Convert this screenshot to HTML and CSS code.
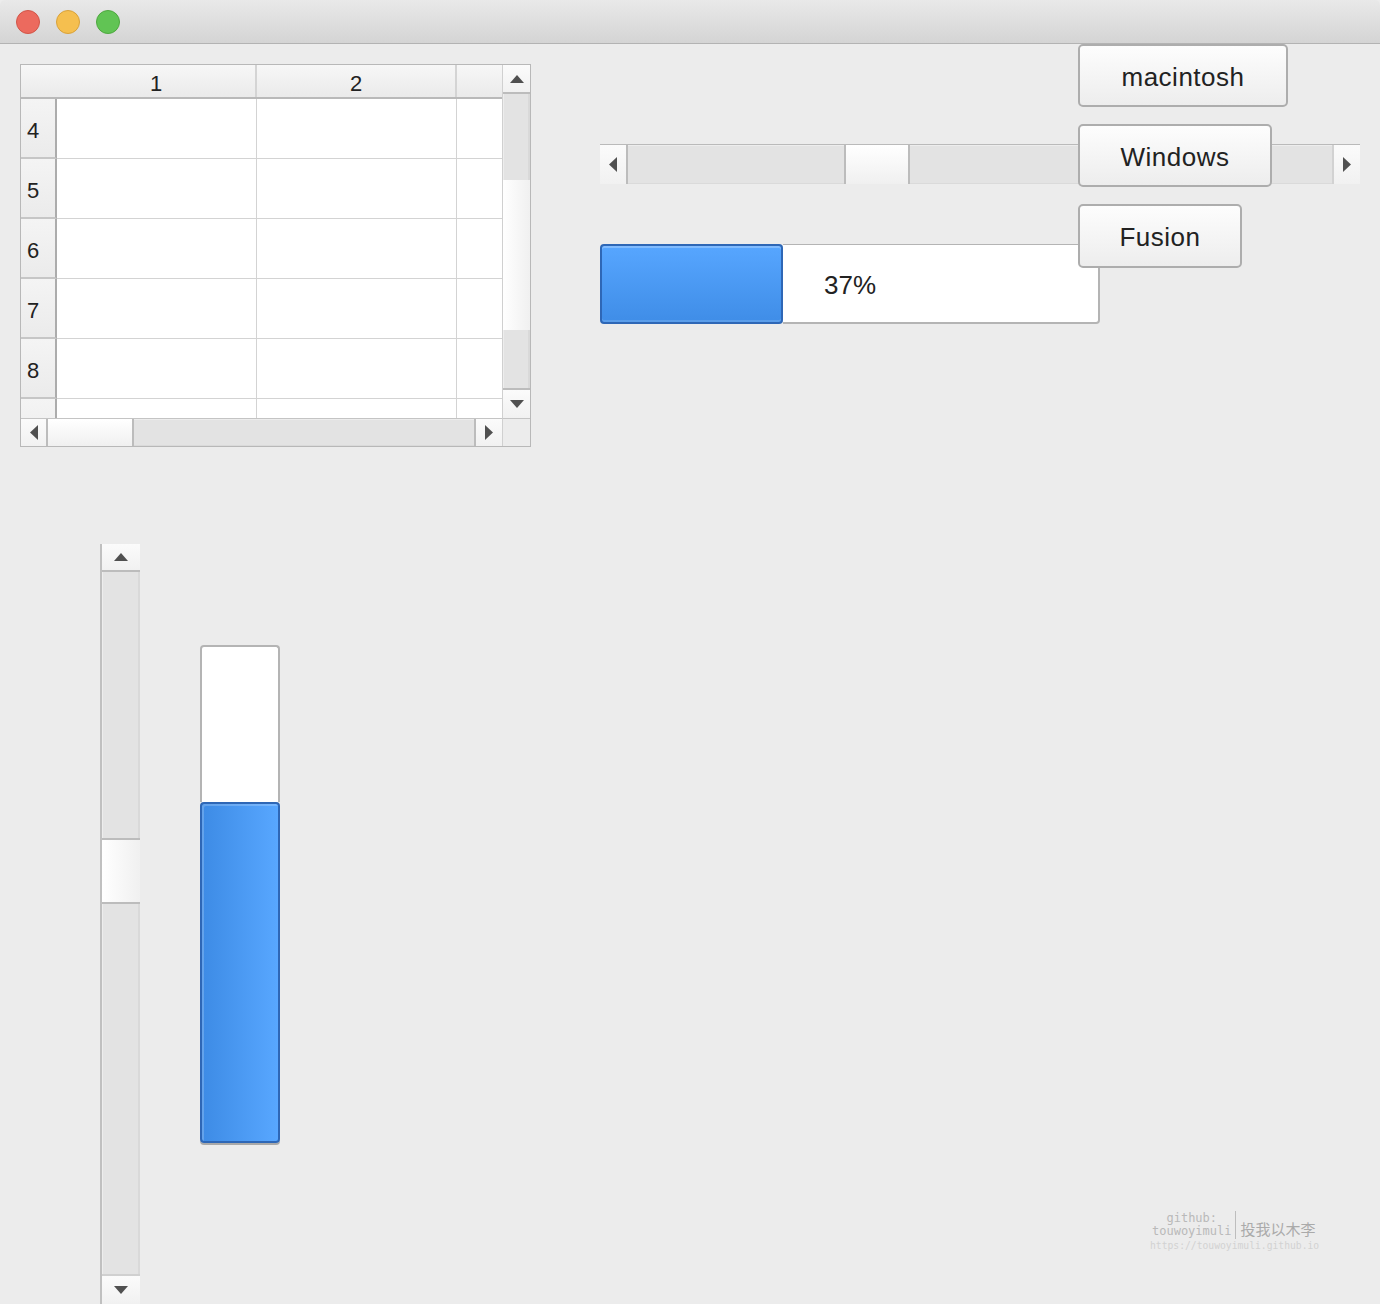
FILE: index.html
```html
<!DOCTYPE html>
<html>
<head>
<meta charset="utf-8">
<link rel="stylesheet" href="styles.css">
</head>
<body>
<div class="window">
  <div class="titlebar">
    <span class="light red"></span>
    <span class="light yellow"></span>
    <span class="light green"></span>
  </div>
  <div class="content">
    <div class="top-row">
      <div class="table">
        <div class="viewport">
          <div class="thead">
            <div class="corner"></div>
            <div class="th w200">1</div>
            <div class="th w200">2</div>
            <div class="th rest"></div>
          </div>
          <div class="tr"><div class="rh">4</div><div class="td w200"></div><div class="td w200"></div><div class="td rest"></div></div>
          <div class="tr"><div class="rh">5</div><div class="td w200"></div><div class="td w200"></div><div class="td rest"></div></div>
          <div class="tr"><div class="rh">6</div><div class="td w200"></div><div class="td w200"></div><div class="td rest"></div></div>
          <div class="tr"><div class="rh">7</div><div class="td w200"></div><div class="td w200"></div><div class="td rest"></div></div>
          <div class="tr"><div class="rh">8</div><div class="td w200"></div><div class="td w200"></div><div class="td rest"></div></div>
          <div class="tr"><div class="rh"></div><div class="td w200"></div><div class="td w200"></div><div class="td rest"></div></div>
        </div>
        <div class="tvsb">
          <div class="arrow a-up-t"><svg width="14" height="8" viewBox="0 0 14 8"><polygon points="0,8 7,0 14,8" fill="#505050"/></svg></div>
          <div class="vtrack t-seg1"></div>
          <div class="vhandle t-handle"></div>
          <div class="vtrack t-seg2"></div>
          <div class="arrow a-down-t"><svg width="14" height="8" viewBox="0 0 14 8"><polygon points="0,0 14,0 7,8" fill="#505050"/></svg></div>
        </div>
        <div class="thsb">
          <div class="harrow ha-left"><svg width="8" height="15" viewBox="0 0 8 15"><polygon points="8,0 0,7.5 8,15" fill="#505050"/></svg></div>
          <div class="hhandle th-handle"></div>
          <div class="htrack th-track"></div>
          <div class="harrow ha-right"><svg width="8" height="15" viewBox="0 0 8 15"><polygon points="0,0 8,7.5 0,15" fill="#505050"/></svg></div>
        </div>
        <div class="tcorner"></div>
      </div>
      <div class="right-col">
        <div class="hscroll">
          <div class="harrow hs-left"><svg width="8" height="15" viewBox="0 0 8 15"><polygon points="8,0 0,7.5 8,15" fill="#505050"/></svg></div>
          <div class="htrack hs-seg1"></div>
          <div class="hhandle hs-handle"></div>
          <div class="htrack hs-seg2"></div>
          <div class="harrow hs-right"><svg width="8" height="15" viewBox="0 0 8 15"><polygon points="0,0 8,7.5 0,15" fill="#505050"/></svg></div>
        </div>
        <div class="hprogress">
          <div class="hp-bar">
            <div class="hp-chunk" style="width:183px"></div>
            <div class="hp-rest"></div>
          </div>
          <div class="hp-label">37%</div>
        </div>
      </div>
    </div>
    <div class="bottom-row">
      <div class="vscroll">
        <div class="arrow vs-up"><svg width="14" height="8" viewBox="0 0 14 8"><polygon points="0,8 7,0 14,8" fill="#505050"/></svg></div>
        <div class="vtrack vs-seg1"></div>
        <div class="vhandle vs-handle"></div>
        <div class="vtrack vs-seg2"></div>
        <div class="arrow vs-down"><svg width="14" height="8" viewBox="0 0 14 8"><polygon points="0,0 14,0 7,8" fill="#505050"/></svg></div>
      </div>
      <div class="vprogress">
        <div class="vp-rest"></div>
        <div class="vp-chunk" style="height:341px"></div>
      </div>
    </div>
    <div class="btn-stack">
      <div class="btn b-mac">macintosh</div>
      <div class="btn b-win">Windows</div>
      <div class="btn b-fus">Fusion</div>
    </div>
    <div class="watermark">
      <div class="wm-top">
        <div class="wm-left">github:<br>touwoyimuli</div>
        <div class="wm-bar"></div>
        <div class="wm-cn">投我以木李</div>
      </div>
      <div class="wm-url">https://touwoyimuli.github.io</div>
    </div>
  </div>
</div>
</body>
</html>
```

FILE: styles.css
```css
* { box-sizing: border-box; }
html, body { margin: 0; padding: 0; }
body {
  background: #ececec;
  font-family: "Liberation Sans", Arial, Helvetica, sans-serif;
  color: #222;
}
.window {
  width: 1380px;
  height: 1304px;
  overflow: hidden;
  background: #ececec;
}
.titlebar {
  height: 44px;
  border-bottom: 1px solid #b3b3b3;
  background: linear-gradient(#e9e9e9, #d4d4d4);
  display: flex;
  align-items: center;
  padding-left: 16px;
  gap: 16px;
  border-radius: 5px 5px 0 0;
}
.light {
  width: 24px;
  height: 24px;
  border-radius: 50%;
  display: block;
}
.red { background: #ec6a5e; border: 1px solid #d25548; }
.yellow { background: #f5bf4f; border: 1px solid #d9a23a; }
.green { background: #61c454; border: 1px solid #4ea83f; }

.content {
  position: relative;
  height: 1260px;
}
.top-row {
  display: flex;
  align-items: flex-start;
  padding-top: 20px;
  padding-left: 20px;
}

/* table */
.table {
  width: 511px;
  height: 383px;
  border: 1px solid #b8b8b8;
  display: grid;
  grid-template-columns: 481px 28px;
  grid-template-rows: 353px 28px;
  background: #ececec;
}
.viewport {
  overflow: hidden;
  background: #fff;
}
.thead {
  display: flex;
  height: 34px;
  background: linear-gradient(#f7f7f7, #eaeaea);
  border-bottom: 2px solid #b9b9b9;
}
.corner { width: 36px; flex: none; }
.th {
  font-size: 22px;
  line-height: 32px;
  padding-top: 3px;
  text-align: center;
  border-right: 2px solid #d4d4d4;
}
.w200 { width: 200px; flex: none; }
.rest { flex: 1; }
.th.rest { border-right: none; }
.tr {
  display: flex;
  height: 60px;
}
.rh {
  width: 36px;
  flex: none;
  border-right: 2px solid #acacac;
  border-bottom: 2px solid #c6c6c6;
  background: linear-gradient(#f4f4f4, #ebebeb);
  font-size: 22px;
  padding-left: 6px;
  padding-top: 5px;
  display: flex;
  align-items: center;
}
.td {
  border-right: 1px solid #d3d3d3;
  border-bottom: 1px solid #d3d3d3;
}
.td.rest { border-right: none; }

/* generic scrollbar parts */
.arrow, .harrow {
  display: flex;
  align-items: center;
  justify-content: center;
  background: linear-gradient(#fbfbfb, #f1f1f1);
  flex: none;
}
.vtrack {
  background: #e3e3e3;
  box-shadow: inset 1px 0 0 #ededed, inset -2px 0 0 #d9d9d9;
  flex: none;
}
.htrack {
  background: #e3e3e3;
  box-shadow: inset 0 1px 0 #ededed, inset 0 -1px 0 #dadada;
  flex: none;
}
.vhandle {
  background: linear-gradient(to right, #ffffff, #f0f0f0);
  flex: none;
}
.hhandle {
  background: linear-gradient(#ffffff, #f0f0f0);
  flex: none;
}

/* table vertical scrollbar */
.tvsb {
  display: flex;
  flex-direction: column;
  border-left: 1px solid #d0d0d0;
}
.a-up-t { height: 27px; }
.t-seg1 { height: 88px; border-top: 2px solid #bcbcbc; }
.t-handle { height: 150px; }
.t-seg2 { height: 60px; border-bottom: 2px solid #bcbcbc; }
.a-down-t { height: 28px; }

/* table horizontal scrollbar */
.thsb {
  display: flex;
  border-top: 1px solid #c4c4c4;
}
.ha-left { width: 27px; border-right: 2px solid #bcbcbc; }
.th-handle { width: 86px; border-right: 2px solid #bcbcbc; }
.th-track { width: 340px; }
.ha-right { width: 28px; border-left: 2px solid #bcbcbc; }
.tcorner {
  background: #ececec;
  border-top: 1px solid #c4c4c4;
  border-left: 1px solid #d0d0d0;
}

/* right column */
.right-col {
  margin-left: 69px;
  padding-top: 80px;
  display: flex;
  flex-direction: column;
}
.hscroll {
  width: 760px;
  height: 40px;
  display: flex;
  border-top: 1px solid #bababa;
}
.hs-left { width: 26px; }
.hs-seg1 { width: 218px; border-left: 2px solid #bcbcbc; }
.hs-handle { width: 66px; border-left: 2px solid #bcbcbc; border-right: 2px solid #bcbcbc; }
.hs-seg2 { width: 422px; }
.hs-right { width: 28px; border-left: 2px solid #d2d2d2; }

.hprogress {
  margin-top: 60px;
  width: 500px;
  height: 80px;
  display: grid;
}
.hp-bar, .hp-label { grid-area: 1 / 1; }
.hp-bar { display: flex; }
.hp-chunk {
  border: 2px solid #2e67b6;
  border-radius: 4px;
  background: linear-gradient(#57a6ff, #3f8de7);
  box-shadow: inset 0 2px 0 rgba(255,255,255,0.25), inset 0 -2px 0 rgba(255,255,255,0.15);
}
.hp-rest {
  flex: 1;
  background: #fff;
  border: 2px solid #b4b4b4;
  border-left: none;
  border-top-width: 1px;
  border-radius: 0 4px 4px 0;
}
.hp-label {
  place-self: center;
  font-size: 26px;
  padding-top: 2px;
  color: #222;
}

/* bottom row */
.bottom-row {
  display: flex;
  align-items: flex-start;
  margin-top: 97px;
}
.vscroll {
  margin-left: 100px;
  width: 40px;
  height: 760px;
  display: flex;
  flex-direction: column;
  border-left: 2px solid #c0c0c0;
}
.vs-up { height: 26px; }
.vs-seg1 { height: 268px; border-top: 2px solid #bcbcbc; }
.vs-handle { height: 66px; border-top: 2px solid #bcbcbc; border-bottom: 2px solid #bcbcbc; }
.vs-seg2 { height: 372px; border-bottom: 2px solid #d0d0d0; }
.vs-down { height: 28px; }

.vprogress {
  margin-left: 60px;
  margin-top: 101px;
  width: 80px;
  height: 498px;
  display: flex;
  flex-direction: column;
}
.vp-rest {
  flex: 1;
  background: #fff;
  border: 2px solid #b4b4b4;
  border-bottom: none;
  border-radius: 4px 4px 0 0;
}
.vp-chunk {
  flex: none;
  border: 2px solid #2e67b6;
  border-radius: 4px;
  background: linear-gradient(to right, #3d8be5, #58a7ff);
  box-shadow: inset 2px 2px 0 rgba(255,255,255,0.2), 0 2px 0 #a9a9a9;
}

/* buttons (overlapping other widgets) */
.btn-stack {
  position: absolute;
  left: 1078px;
  top: 0;
  display: flex;
  flex-direction: column;
  align-items: flex-start;
  gap: 17px;
}
.btn {
  height: 63px;
  border: 2px solid #adadad;
  border-radius: 5px;
  background: linear-gradient(#fdfdfd, #ededed);
  font-size: 26px;
  letter-spacing: 0.5px;
  padding-top: 3px;
  display: flex;
  align-items: center;
  justify-content: center;
  color: #222;
}
.b-mac { width: 210px; }
.b-win { width: 194px; }
.b-fus { width: 164px; height: 64px; }

/* watermark overlay */
.watermark {
  position: absolute;
  left: 1150px;
  top: 1166px;
  font-family: "DejaVu Sans Mono", "Liberation Mono", monospace;
  color: #b9b9b9;
}
.wm-top {
  display: flex;
  align-items: center;
}
.wm-left {
  font-size: 12px;
  line-height: 13px;
  text-align: center;
  padding-left: 2px;
}
.wm-bar {
  width: 1px;
  height: 28px;
  background: #bdbdbd;
  margin: 0 4px 0 4px;
}
.wm-cn {
  font-family: "Noto Sans CJK SC", sans-serif;
  font-size: 15px;
  color: #aaaaaa;
  margin-top: 8px;
}
.wm-url {
  font-size: 9.7px;
  color: #d2d2d2;
  margin-top: 1px;
}
```
